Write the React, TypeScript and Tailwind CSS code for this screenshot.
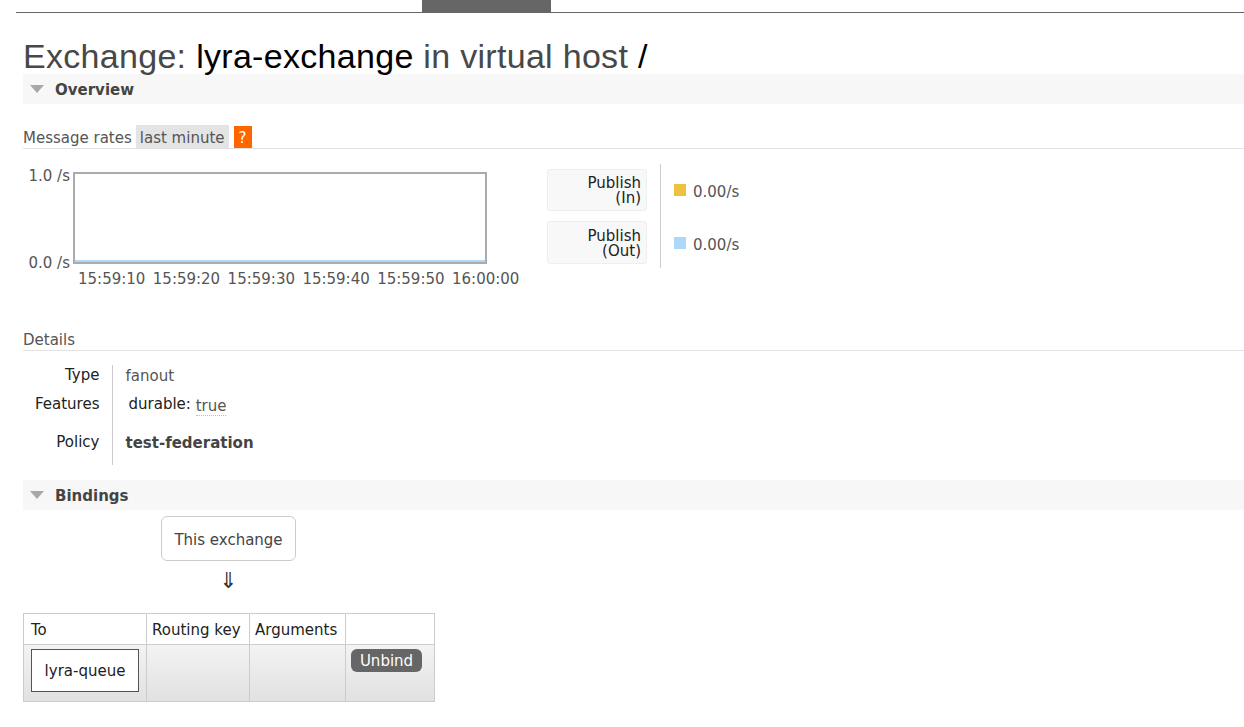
import React from 'react';

const ticks = ['15:59:10', '15:59:20', '15:59:30', '15:59:40', '15:59:50', '16:00:00'];

const SectionBar: React.FC<{ title: string }> = ({ title }) => (
  <div className="flex h-[30px] items-center bg-[#f7f7f7]">
    <svg className="ml-[7px] mr-[11px]" width="14" height="8" viewBox="0 0 14 8">
      <polygon points="0,0 14,0 7,8" fill="#a8a8a8" />
    </svg>
    <span className="relative top-px font-bold text-[#444]">{title}</span>
  </div>
);

const LegendRow: React.FC<{ label: string; color: string }> = ({ label, color }) => (
  <div className="flex h-[42px] items-center">
    <span className={`mr-[7px] inline-block h-[12px] w-[12px] ${color}`} />
    <span className="relative top-[2px]">{label}</span>
  </div>
);

export default function App() {
  return (
    <div className="min-h-[727px] bg-white text-[15px] leading-[17px] text-[#4a4a4a] [font-family:'DejaVu_Sans',Verdana,sans-serif]">
      {/* top nav remnant */}
      <div className="ml-[16px] border-b border-[#666]">
        <div className="ml-[406px] h-[12px] w-[129px] bg-[#666]" />
      </div>

      <div className="pl-[23px]">
        <h1 className="mt-[25px] text-[34px] leading-[36px] font-normal tracking-[0.3px] text-[#484848] [font-family:'Liberation_Sans',Arial,sans-serif]">
          Exchange: <span className="text-black">lyra-exchange</span> in virtual host <span className="text-black">/</span>
        </h1>

        <SectionBar title="Overview" />

        {/* message rates */}
        <div className="mt-[21px] flex h-[24px] items-center border-b border-[#e2e2e2]">
          <span className="mr-[4px] pt-[4px] text-[#555]">Message rates</span>
          <span className="flex h-[23px] items-center bg-[#e4e4e4] px-[4px] pt-[4px] text-[#555]">last minute</span>
          <span className="ml-[5px] flex h-[22px] w-[18px] items-center justify-center bg-[#ff6600] pt-[3px] text-white">?</span>
        </div>

        <div className="mt-[15px] flex">
          <div className="w-[524px] pt-[2px]">
            <div className="flex">
              <div className="relative top-[2px] flex h-[104px] w-[50px] flex-col items-end justify-between pr-[3px] text-[#555]">
                <span>1.0 /s</span>
                <span>0.0 /s</span>
              </div>
              <div className="mt-[6px] flex h-[92px] w-[414px] flex-col justify-end border-2 border-[#ababab] bg-white">
                <div className="h-[2px] bg-[#afd8f8]" />
              </div>
            </div>
            <div className="ml-[55px] flex pt-px text-[#555]">
              {ticks.map((t) => (
                <span key={t} className="w-[74.8px] shrink-0">{t}</span>
              ))}
            </div>
          </div>

          <div className="flex h-[104px]">
            <div className="flex w-[113px] flex-col gap-[10px] pr-[13px] pt-[5px]">
              <div className="flex h-[42px] flex-col items-end justify-center rounded-[3px] border border-[#eee] bg-[#f8f8f8] pr-[5px] pt-[2px] leading-[15px] text-[#222]">
                <span>Publish</span>
                <span>(In)</span>
              </div>
              <div className="flex h-[43px] flex-col items-end justify-center rounded-[3px] border border-[#eee] bg-[#f8f8f8] pr-[5px] pt-[2px] leading-[15px] text-[#222]">
                <span>Publish</span>
                <span>(Out)</span>
              </div>
            </div>
            <div className="flex flex-col gap-[11px] border-l border-[#ccc] pl-[13px] pt-[5px] text-[#555]">
              <LegendRow label="0.00/s" color="bg-[#edc240]" />
              <LegendRow label="0.00/s" color="bg-[#afd8f8]" />
            </div>
          </div>
        </div>

        {/* details */}
        <div className="mt-[43px] border-b border-[#e2e2e2] pb-[1px] pt-px text-[#555]">Details</div>

        <table className="mt-[14px] border-collapse">
          <tbody>
            <tr className="h-[24px]">
              <th className="w-[89px] pr-[12px] pt-[2px] text-right align-top font-normal text-[#222]">Type</th>
              <td className="border-l border-[#ccc] pl-[13px] pt-[3px] align-top text-[#555]">fanout</td>
            </tr>
            <tr className="h-[34px]">
              <th className="pr-[12px] pt-[7px] text-right align-top font-normal text-[#222]">Features</th>
              <td className="border-l border-[#ccc] pl-[16px] pt-[7px] align-top">
                <span className="text-[#222]">durable:</span>{' '}
                <span className="relative top-[2px] border-b border-dotted border-[#bbb] text-[#555]">true</span>
              </td>
            </tr>
            <tr className="h-[42px]">
              <th className="pr-[12px] pt-[11px] text-right align-top font-normal text-[#222]">Policy</th>
              <td className="border-l border-[#ccc] pl-[13px] pt-[12px] align-top font-bold text-[#444]">test-federation</td>
            </tr>
          </tbody>
        </table>

        <div className="mt-[15px]">
          <SectionBar title="Bindings" />
        </div>

        <div className="ml-[138px] mt-[6px] inline-flex flex-col items-center">
          <div className="flex h-[45px] w-[135px] items-center justify-center rounded-[6px] border border-[#ccc] bg-white pt-[3px] text-[#444]">
            This exchange
          </div>
          <div className="mt-[8px] text-[22px] leading-[24px] text-[#333]">⇓</div>
        </div>

        <table className="mt-[20px] border-collapse text-[#222]">
          <thead>
            <tr className="h-[31px] bg-white">
              <th className="w-[121px] border border-[#ccc] px-[7px] pt-[2px] text-left font-normal">To</th>
              <th className="w-[103px] border border-[#ccc] px-[5px] pt-[2px] text-left font-normal">Routing key</th>
              <th className="w-[96px] border border-[#ccc] px-[5px] pt-[2px] text-left font-normal">Arguments</th>
              <th className="w-[89px] border border-[#ccc]"></th>
            </tr>
          </thead>
          <tbody>
            <tr className="h-[57px] bg-gradient-to-b from-[#f3f3f3] to-[#e1e1e1]">
              <td className="border border-[#ccc] px-[7px] pt-[4px] align-top">
                <div className="flex h-[43px] w-[108px] items-center justify-center border border-[#555] bg-white pt-[2px] text-[#1a1a2a]">
                  lyra-queue
                </div>
              </td>
              <td className="border border-[#ccc]"></td>
              <td className="border border-[#ccc]"></td>
              <td className="border border-[#ccc] px-[5px] pt-[4px] align-top">
                <span className="flex h-[23px] w-[71px] items-center justify-center rounded-[6px] bg-[#666] pt-[2px] text-white">Unbind</span>
              </td>
            </tr>
          </tbody>
        </table>
      </div>
    </div>
  );
}
